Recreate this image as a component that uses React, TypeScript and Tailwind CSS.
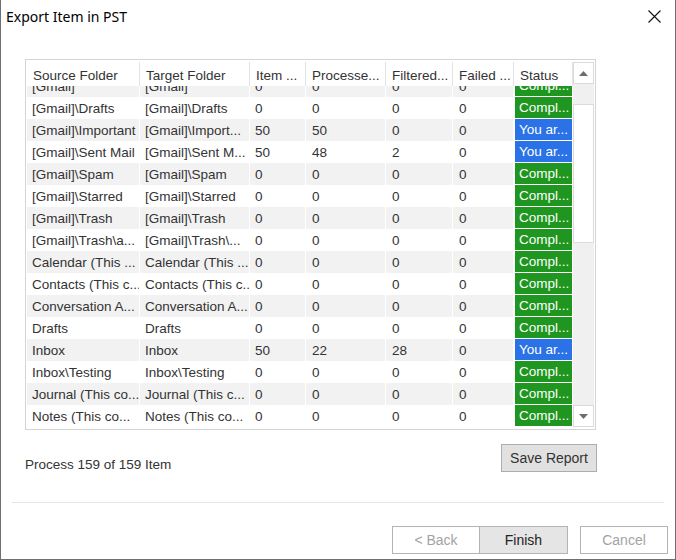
import React from "react";

type Row = {
  source: string;
  target: string;
  items: string;
  processed: string;
  filtered: string;
  failed: string;
  done: boolean;
};

const rows: Row[] = [
  { source: "[Gmail]", target: "[Gmail]", items: "0", processed: "0", filtered: "0", failed: "0", done: true },
  { source: "[Gmail]\\Drafts", target: "[Gmail]\\Drafts", items: "0", processed: "0", filtered: "0", failed: "0", done: true },
  { source: "[Gmail]\\Important", target: "[Gmail]\\Import...", items: "50", processed: "50", filtered: "0", failed: "0", done: false },
  { source: "[Gmail]\\Sent Mail", target: "[Gmail]\\Sent M...", items: "50", processed: "48", filtered: "2", failed: "0", done: false },
  { source: "[Gmail]\\Spam", target: "[Gmail]\\Spam", items: "0", processed: "0", filtered: "0", failed: "0", done: true },
  { source: "[Gmail]\\Starred", target: "[Gmail]\\Starred", items: "0", processed: "0", filtered: "0", failed: "0", done: true },
  { source: "[Gmail]\\Trash", target: "[Gmail]\\Trash", items: "0", processed: "0", filtered: "0", failed: "0", done: true },
  { source: "[Gmail]\\Trash\\a...", target: "[Gmail]\\Trash\\...", items: "0", processed: "0", filtered: "0", failed: "0", done: true },
  { source: "Calendar (This ...", target: "Calendar (This ...", items: "0", processed: "0", filtered: "0", failed: "0", done: true },
  { source: "Contacts (This c...", target: "Contacts (This c...", items: "0", processed: "0", filtered: "0", failed: "0", done: true },
  { source: "Conversation A...", target: "Conversation A...", items: "0", processed: "0", filtered: "0", failed: "0", done: true },
  { source: "Drafts", target: "Drafts", items: "0", processed: "0", filtered: "0", failed: "0", done: true },
  { source: "Inbox", target: "Inbox", items: "50", processed: "22", filtered: "28", failed: "0", done: false },
  { source: "Inbox\\Testing", target: "Inbox\\Testing", items: "0", processed: "0", filtered: "0", failed: "0", done: true },
  { source: "Journal (This co...", target: "Journal (This c...", items: "0", processed: "0", filtered: "0", failed: "0", done: true },
  { source: "Notes (This co...", target: "Notes (This co...", items: "0", processed: "0", filtered: "0", failed: "0", done: true },
];

const headers = [
  { label: "Source Folder", w: "w-[113px]" },
  { label: "Target Folder", w: "w-[110px]" },
  { label: "Item ...", w: "w-[56px]" },
  { label: "Processe...", w: "w-[80px]" },
  { label: "Filtered...", w: "w-[67px]" },
  { label: "Failed ...", w: "w-[61px]" },
  { label: "Status", w: "w-[59px]" },
];

const cell = "h-full shrink-0 overflow-hidden whitespace-nowrap pl-[5px] leading-[24px] border-r border-white";

function Arrow({ up }: { up: boolean }) {
  return (
    <svg width="9" height="5" viewBox="0 0 9 5">
      <path d={up ? "M0 5 L4.5 0 L9 5 Z" : "M0 0 L4.5 5 L9 0 Z"} fill="#6d6d6d" />
    </svg>
  );
}

export default function App() {
  return (
    <div
      className="relative flex h-[560px] w-[676px] flex-col border-x border-b border-[#6f6f6f] bg-white text-[#333]"
      style={{ fontFamily: '"Liberation Sans", Arial, sans-serif' }}
    >
      {/* title bar */}
      <div className="flex h-[33px] items-center justify-between pl-[5px] pr-[14px]">
        <span className="text-[14px] text-black" style={{ fontFamily: '"Noto Sans", sans-serif' }}>
          Export Item in PST
        </span>
        <svg width="13" height="13" viewBox="0 0 13 13">
          <path d="M0.5 0.5 L12.5 12.5 M12.5 0.5 L0.5 12.5" stroke="#111" strokeWidth="1.1" />
        </svg>
      </div>

      {/* list view */}
      <div className="ml-[24px] mt-[26px] flex h-[371px] w-[571px] border border-[#d4d4d4] px-[1px] py-[2px] text-[13.5px]">
        <div className="flex w-[546px] flex-col">
          <div className="flex h-[24px] shrink-0 bg-white">
            {headers.map((h) => (
              <div
                key={h.label}
                className={`${h.w} shrink-0 overflow-hidden whitespace-nowrap border-r border-[#e3e3e3] pl-[6px] leading-[27px]`}
              >
                {h.label}
              </div>
            ))}
          </div>
          <div className="h-[341px] overflow-hidden">
            <div className="-mt-[11px] flex flex-col">
              {rows.map((r, i) => (
                <div key={i} className={`flex h-[22px] ${i % 2 === 0 ? "bg-[#f2f2f2]" : "bg-white"}`}>
                  <div className={`${cell} w-[113px]`}>{r.source}</div>
                  <div className={`${cell} w-[110px]`}>{r.target}</div>
                  <div className={`${cell} w-[56px]`}>{r.items}</div>
                  <div className={`${cell} w-[80px] pl-[6px]`}>{r.processed}</div>
                  <div className={`${cell} w-[67px] pl-[6px]`}>{r.filtered}</div>
                  <div className={`${cell} w-[61px] pl-[6px]`}>{r.failed}</div>
                  <div
                    className={`h-full w-[59px] shrink-0 overflow-hidden whitespace-nowrap border-x border-b border-white pl-[4px] leading-[22px] text-white ${
                      r.done ? "bg-[#1f961f]" : "bg-[#2b72e6]"
                    }`}
                  >
                    {r.done ? "Compl..." : "You ar..."}
                  </div>
                </div>
              ))}
            </div>
          </div>
        </div>

        {/* scrollbar */}
        <div className="flex h-[365px] w-[21px] flex-col bg-[#f0f0f0]">
          <div className="flex h-[22px] items-center justify-center border border-[#dadada] bg-white">
            <Arrow up />
          </div>
          <div className="h-[20px]" />
          <div className="h-[139px] border border-[#dcdcdc] bg-white" />
          <div className="flex-1" />
          <div className="flex h-[22px] items-center justify-center border border-[#dadada] bg-white">
            <Arrow up={false} />
          </div>
        </div>
      </div>

      {/* status + save */}
      <div className="ml-[24px] mt-[14px] flex w-[572px] items-start justify-between">
        <span className="mt-[13px] text-[13.5px] leading-[16px]">Process 159 of 159 Item</span>
        <button className="h-[28px] w-[96px] border border-[#adadad] bg-[#e1e1e1] text-[14px] text-[#333]">
          Save Report
        </button>
      </div>

      <div className="mx-[11px] mt-[29px] h-px bg-[#e6e6e6]" />

      {/* wizard buttons */}
      <div className="mt-[23px] flex justify-end pr-[7px] text-[14px]">
        <button className="h-[28px] w-[88px] border border-[#b4b4b4] bg-white text-[#a3a3a3]">&lt; Back</button>
        <button className="h-[28px] w-[88px] border border-l-0 border-[#b4b4b4] bg-[#e5e5e5] text-[#222]">
          Finish
        </button>
        <button className="ml-[12px] h-[28px] w-[88px] border border-[#b4b4b4] bg-white text-[#a3a3a3]">
          Cancel
        </button>
      </div>
    </div>
  );
}
